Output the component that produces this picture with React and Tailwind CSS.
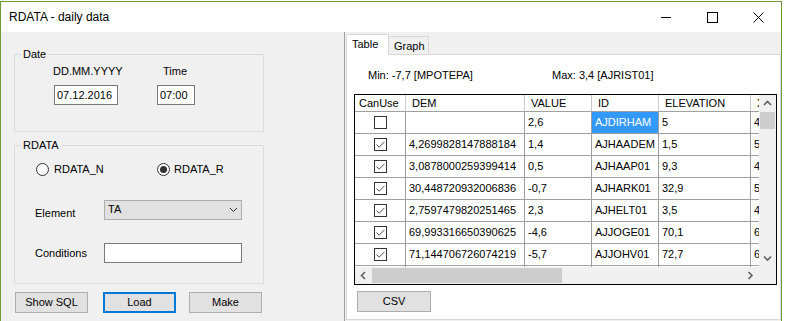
import React from "react";

const rows = [
  [false, "", "2,6", "AJDIRHAM", "5", "4"],
  [true, "4,2699828147888184", "1,4", "AJHAADEM", "1,5", "5"],
  [true, "3,0878000259399414", "0,5", "AJHAAP01", "9,3", "4"],
  [true, "30,448720932006836", "-0,7", "AJHARK01", "32,9", "5"],
  [true, "2,7597479820251465", "2,3", "AJHELT01", "3,5", "4"],
  [true, "69,993316650390625", "-4,6", "AJJOGE01", "70,1", "6"],
  [true, "71,144706726074219", "-5,7", "AJJOHV01", "72,7", "6"],
  [true, "", "", "", "", ""],
];

function Check({ checked }) {
  return (
    <div className="w-[13px] h-[13px] border border-[#333333] bg-white flex items-center justify-center">
      {checked && (
        <svg width="11" height="11" viewBox="0 0 11 11">
          <path d="M1.5 5.5 L4.2 8.2 L9.5 2.8" fill="none" stroke="#555" strokeWidth="1" />
        </svg>
      )}
    </div>
  );
}

function Radio({ checked }) {
  return (
    <div className="w-[13px] h-[13px] rounded-full border border-[#333333] bg-white flex items-center justify-center">
      {checked && <div className="w-[7px] h-[7px] rounded-full bg-[#333333]" />}
    </div>
  );
}

function Chev({ dir }) {
  const d = {
    up: "M1 5 L4.5 1.5 L8 5",
    down: "M1 1.5 L4.5 5 L8 1.5",
    left: "M5 1 L1.5 4.5 L5 8",
    right: "M1.5 1 L5 4.5 L1.5 8",
  }[dir];
  const horiz = dir === "up" || dir === "down";
  return (
    <svg width={horiz ? 9 : 7} height={horiz ? 7 : 9} viewBox={horiz ? "0 0 9 7" : "0 0 7 9"}>
      <path d={d} fill="none" stroke="#606060" strokeWidth="1.6" />
    </svg>
  );
}

function Btn({ children, focus }) {
  return (
    <div
      className={
        focus
          ? "w-[73px] h-[21px] border-2 border-[#0078d7] bg-[#e1e1e1] flex items-center justify-center"
          : "w-[73px] h-[21px] border border-[#adadad] bg-[#e1e1e1] flex items-center justify-center"
      }
    >
      {children}
    </div>
  );
}

const colW = ["w-[51px]", "w-[119px]", "w-[67px]", "w-[67px]", "w-[92px]", "w-[20px]"];

export default function App() {
  return (
    <div className="w-[787px] h-[321px] bg-white overflow-hidden font-['Liberation_Sans',Arial,sans-serif] text-[11px] leading-[13px] text-black">
      <div className="mt-[1px] w-[782px] h-[320px] border-l border-t border-r border-[#6f9b35] flex flex-col">
        {/* Title bar */}
        <div className="h-[30px] bg-white flex items-center shrink-0">
          <div className="ml-[8px] text-[12px] leading-[14px] flex-1">RDATA - daily data</div>
          <div className="w-[46px] h-[30px] flex items-center justify-center">
            <div className="w-[10px] h-px bg-black" />
          </div>
          <div className="w-[46px] h-[30px] flex items-center justify-center">
            <div className="w-[11px] h-[11px] border border-black" />
          </div>
          <div className="w-[46px] h-[30px] flex items-center justify-center">
            <svg width="11" height="11" viewBox="0 0 11 11">
              <path d="M0.5 0.5 L10.5 10.5 M10.5 0.5 L0.5 10.5" stroke="#000" strokeWidth="1" />
            </svg>
          </div>
        </div>

        {/* Client */}
        <div className="flex-1 bg-[#f0f0f0] flex">
          {/* Left panel */}
          <div className="w-[343px] pl-[13px] pt-[22px] flex flex-col">
            <div className="relative w-[250px] h-[78px] border border-[#dcdcdc]">
              <div className="absolute -top-[7px] left-[6px] px-[2px] bg-[#f0f0f0]">Date</div>
              <div className="flex mt-[10px]">
                <div className="ml-[38px] w-[110px]">DD.MM.YYYY</div>
                <div>Time</div>
              </div>
              <div className="flex mt-[7px]">
                <div className="ml-[39px] w-[64px] h-[20px] border border-[#7a7a7a] bg-white pl-[2px] flex items-center">07.12.2016</div>
                <div className="ml-[39px] w-[38px] h-[20px] border border-[#7a7a7a] bg-white pl-[2px] flex items-center">07:00</div>
              </div>
            </div>

            <div className="relative mt-[13px] w-[250px] h-[139px] border border-[#dcdcdc]">
              <div className="absolute -top-[7px] left-[6px] px-[2px] bg-[#f0f0f0]">RDATA</div>
              <div className="flex items-center mt-[17px]">
                <div className="ml-[21px]"><Radio /></div>
                <div className="ml-[5px] w-[103px]">RDATA_N</div>
                <Radio checked />
                <div className="ml-[4px]">RDATA_R</div>
              </div>
              <div className="flex items-center mt-[23px]">
                <div className="ml-[20px] w-[69px] mt-[8px]">Element</div>
                <div className="w-[138px] h-[20px] border border-[#adadad] bg-[#e1e1e1] flex items-center pl-[3px] pr-[3px]">
                  <div className="flex-1">TA</div>
                  <svg width="9" height="6" viewBox="0 0 9 6">
                    <path d="M1 1 L4.5 4.5 L8 1" fill="none" stroke="#333" strokeWidth="1" />
                  </svg>
                </div>
              </div>
              <div className="flex items-center mt-[23px]">
                <div className="ml-[20px] w-[69px]">Conditions</div>
                <div className="w-[138px] h-[20px] border border-[#7a7a7a] bg-white" />
              </div>
            </div>

            <div className="flex mt-[8px] ml-[1px]">
              <Btn>Show SQL</Btn>
              <div className="ml-[15px]"><Btn focus>Load</Btn></div>
              <div className="ml-[13px]"><Btn>Make</Btn></div>
            </div>
          </div>

          {/* Right panel */}
          <div className="flex-1 border-l border-[#a0a0a0] pl-[1px] pt-[1px] flex flex-col">
            <div className="flex items-end h-[21px] shrink-0">
              <div className="relative z-10 w-[43px] h-[21px] -mb-px bg-white border-t border-l border-r border-[#d9d9d9] pl-[5px] pt-[3px]">Table</div>
              <div className="w-[40px] h-[18px] bg-[#f0f0f0] border-t border-r border-[#d9d9d9] pl-[5px] pt-[3px]">Graph</div>
            </div>
            <div className="w-[435px] h-[266px] bg-white border border-[#d9d9d9] flex flex-col">
              <div className="flex mt-[14px]">
                <div className="ml-[21px] w-[184px]">Min: -7,7 [MPOTEPA]</div>
                <div>Max: 3,4 [AJRIST01]</div>
              </div>
              {/* Grid */}
              <div className="ml-[7px] mt-[12px] w-[423px] h-[191px] border border-black flex flex-col">
                <div className="flex h-[172px]">
                  <div className="w-[404px] overflow-hidden">
                    <div className="flex h-[17px] border-b border-[#a0a0a0] w-[430px]">
                      {["CanUse", "DEM", "VALUE", "ID", "ELEVATION", "X"].map((h, i) => (
                        <div
                          key={h}
                          className={
                            colW[i] +
                            (i === 0
                              ? " shrink-0 pl-[4px] flex items-center border-r border-[#c8c8c8]"
                              : " shrink-0 pl-[6px] flex items-center border-r border-[#c8c8c8]")
                          }
                        >
                          {h}
                        </div>
                      ))}
                    </div>
                    {rows.map((r, ri) => (
                      <div key={ri} className="flex h-[22px] border-b border-[#a0a0a0] w-[430px]">
                        <div className="w-[51px] shrink-0 border-r border-[#a0a0a0] flex items-center justify-center">
                          <Check checked={r[0]} />
                        </div>
                        {r.slice(1).map((c, ci) => {
                          const sel = ri === 0 && ci === 2;
                          return (
                            <div
                              key={ci}
                              className={
                                colW[ci + 1] +
                                (sel
                                  ? " shrink-0 border-r border-[#a0a0a0] flex items-center pl-[3px] bg-[#3399ff] text-white"
                                  : " shrink-0 border-r border-[#a0a0a0] flex items-center pl-[3px]")
                              }
                            >
                              {c}
                            </div>
                          );
                        })}
                      </div>
                    ))}
                  </div>
                  {/* vertical scrollbar */}
                  <div className="w-[17px] bg-[#f0f0f0] flex flex-col items-center">
                    <div className="h-[17px] flex items-center justify-center"><Chev dir="up" /></div>
                    <div className="w-[15px] h-[17px] bg-[#cdcdcd]" />
                    <div className="flex-1" />
                    <div className="h-[17px] flex items-center justify-center"><Chev dir="down" /></div>
                  </div>
                </div>
                {/* horizontal scrollbar */}
                <div className="flex h-[17px]">
                  <div className="w-[404px] bg-[#f0f0f0] flex items-center">
                    <div className="w-[17px] flex items-center justify-center"><Chev dir="left" /></div>
                    <div className="w-[190px] h-[15px] bg-[#cdcdcd]" />
                    <div className="flex-1" />
                    <div className="w-[17px] flex items-center justify-center"><Chev dir="right" /></div>
                  </div>
                  <div className="w-[17px] bg-[#f0f0f0]" />
                </div>
              </div>
              <div className="ml-[10px] mt-[6px]">
                <div className="w-[74px] h-[21px] border border-[#adadad] bg-[#e1e1e1] flex items-center justify-center">CSV</div>
              </div>
            </div>
          </div>
        </div>
      </div>
    </div>
  );
}
